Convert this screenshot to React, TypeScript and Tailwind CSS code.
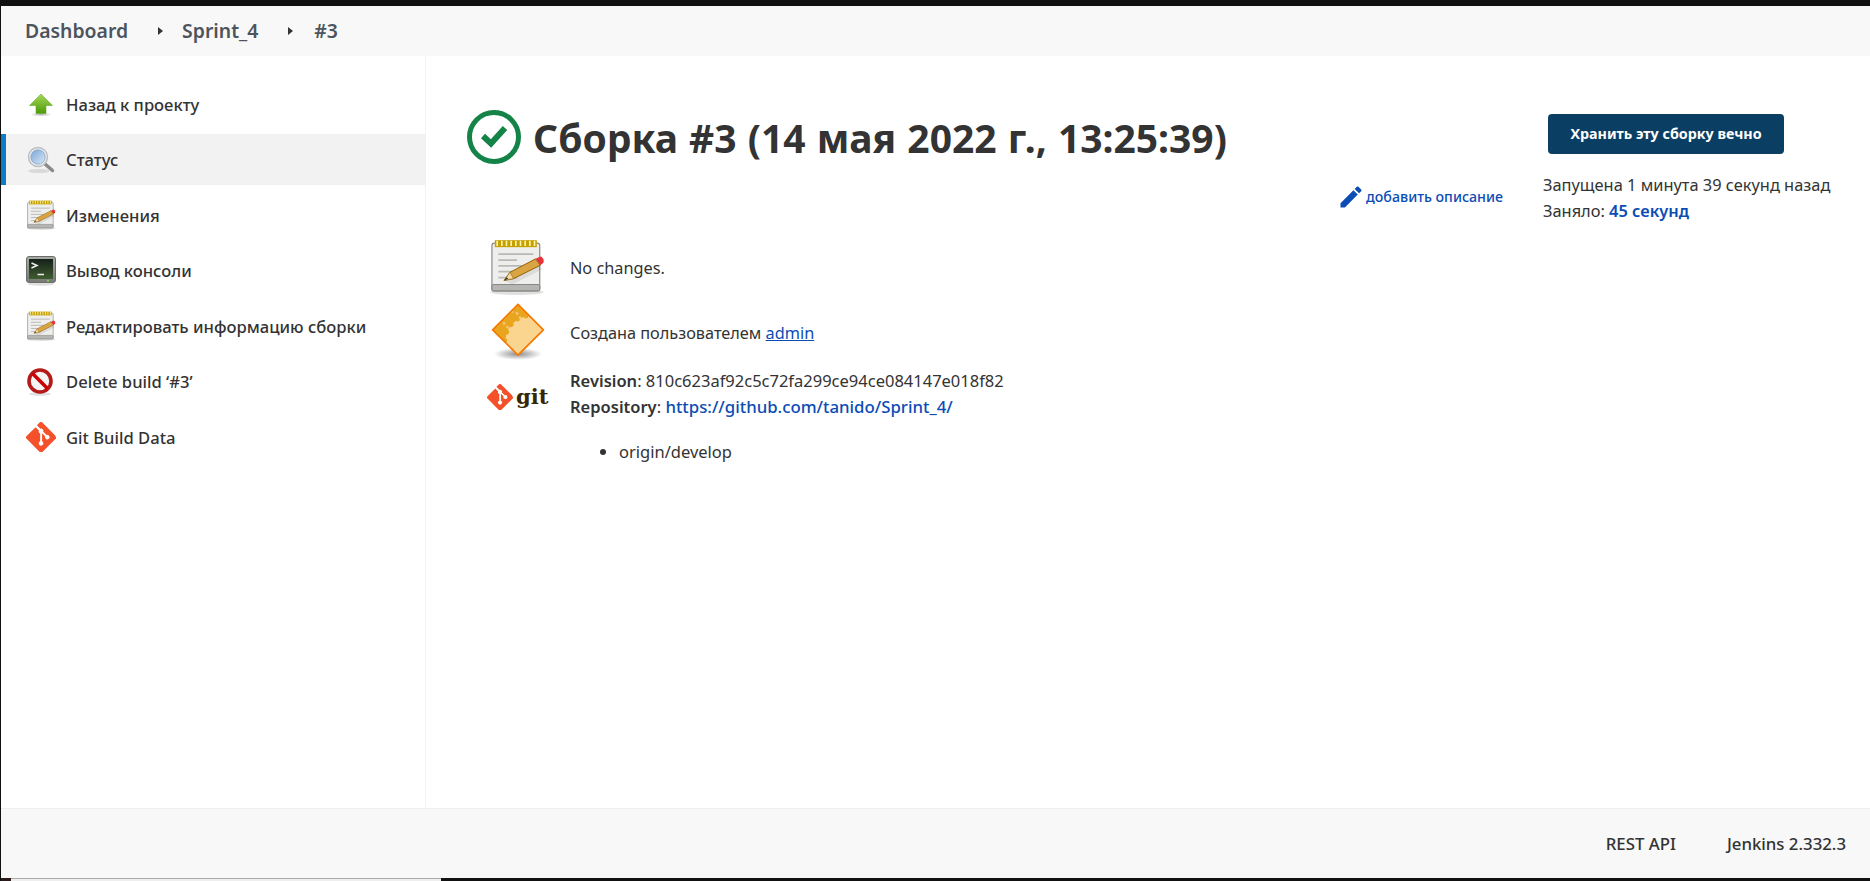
import React from "react";

function ArrowUp() {
  return (
    <svg width="24" height="24" viewBox="0 0 24 24">
      <defs>
        <linearGradient id="au" x1="0" y1="0" x2="0" y2="1">
          <stop offset="0" stopColor="#a6d95a" />
          <stop offset="1" stopColor="#4e9a06" />
        </linearGradient>
        <radialGradient id="sh"><stop offset="0" stopColor="#000" stopOpacity="0.3" /><stop offset="1" stopColor="#000" stopOpacity="0" /></radialGradient>
      </defs>
      <ellipse cx="12" cy="21.5" rx="11" ry="2" fill="url(#sh)" />
      <path d="M12 1 L23.5 12.5 H17 V20.5 H7 V12.5 H0.5 Z" fill="url(#au)" stroke="#5c9e16" strokeWidth="0.5" />
    </svg>
  );
}

function Search() {
  return (
    <svg width="28" height="28" viewBox="0 0 28 28">
      <defs>
        <linearGradient id="gl" x1="0" y1="0" x2="1" y2="1">
          <stop offset="0" stopColor="#7aa6d8" />
          <stop offset="1" stopColor="#dbe8f6" />
        </linearGradient>
      </defs>
      <ellipse cx="12" cy="25" rx="11" ry="2" fill="#000" opacity="0.1" />
      <path d="M18 18 L25.5 24.5" stroke="#8a8a8a" strokeWidth="3.5" strokeLinecap="round" />
      <circle cx="11" cy="11" r="9.5" fill="#eceff2" stroke="#bcc0c4" strokeWidth="1.5" />
      <circle cx="11" cy="11" r="7.2" fill="url(#gl)" stroke="#7d9cc0" strokeWidth="0.7" />
    </svg>
  );
}

function Notepad({ size }: { size: number }) {
  return (
    <svg width={size} height={size} viewBox="0 0 48 48">
      <ellipse cx="24" cy="45.5" rx="23" ry="2.5" fill="#000" opacity="0.12" />
      <rect x="2.5" y="3.5" width="41" height="41" rx="2" fill="#eeeeec" stroke="#888a85" />
      <rect x="2.5" y="39" width="41" height="5.5" rx="1.5" fill="#b5b6b3" stroke="#888a85" />
      <rect x="5" y="1" width="36" height="6" fill="#c4a000" />
      <path d="M7 1.5V6M11 1.5V6M15 1.5V6M19 1.5V6M23 1.5V6M27 1.5V6M31 1.5V6M35 1.5V6M39 1.5V6" stroke="#fff3b0" strokeWidth="1.4" />
      <path d="M8 13H38M8 18H24M8 23H38M8 28H30M8 33H24" stroke="#b9b9b6" strokeWidth="1.5" />
      <path d="M14 36 L41 20 L46 26 L20 39 Z" fill="#000" opacity="0.08" />
      <path d="M13 35.5 L18 28.5 L40 17 L44 22.5 L21 34 Z" fill="#d9a441" stroke="#8f5902" strokeWidth="0.8" />
      <path d="M13 35.5 L18 28.5 L21 34 Z" fill="#f3d9a6" stroke="#8f5902" strokeWidth="0.5" />
      <path d="M13 35.5 L15 32.7 L16.5 34 Z" fill="#333" />
      <path d="M40 17 L44 15 C46.5 15.5 47.5 18.5 46.5 20.5 L44 22.5 Z" fill="#e5333a" />
    </svg>
  );
}

function Terminal() {
  return (
    <svg width="30" height="30" viewBox="0 0 30 30">
      <defs>
        <linearGradient id="fr" x1="0" y1="0" x2="0" y2="1">
          <stop offset="0" stopColor="#a9aba6" />
          <stop offset="1" stopColor="#777974" />
        </linearGradient>
        <linearGradient id="sc" x1="0" y1="0" x2="0" y2="1">
          <stop offset="0" stopColor="#16201a" />
          <stop offset="1" stopColor="#3f5c30" />
        </linearGradient>
      </defs>
      <ellipse cx="15" cy="28" rx="13" ry="1.8" fill="#000" opacity="0.12" />
      <rect x="0.5" y="0.5" width="29" height="26" rx="2.5" fill="url(#fr)" stroke="#6b6d68" />
      <rect x="3" y="3" width="24" height="20" fill="url(#sc)" />
      <path d="M5.5 7 L11 9.5 L5.5 12" fill="none" stroke="#eee" strokeWidth="1.5" />
      <path d="M11.5 18.5H18" stroke="#eee" strokeWidth="1.5" />
      <rect x="21" y="24.2" width="2" height="1.4" fill="#7fe04a" />
    </svg>
  );
}

function NoEntry() {
  return (
    <svg width="28" height="28" viewBox="0 0 28 28">
      <ellipse cx="14" cy="26" rx="11" ry="1.8" fill="#000" opacity="0.12" />
      <circle cx="14" cy="13" r="11" fill="#f4f4f4" stroke="#b51a1a" strokeWidth="3.6" />
      <path d="M6.5 5.5 L21.5 20.5" stroke="#cc0000" strokeWidth="3.6" />
    </svg>
  );
}

function GitDiamond({ size }: { size: number }) {
  return (
    <svg width={size} height={size} viewBox="0 0 92 92">
      <path
        fill="#f4502a"
        d="M90.16 41.9 50.1 1.84a5.9 5.9 0 0 0-8.35 0l-8.32 8.32 10.55 10.55a7 7 0 0 1 8.87 8.93l10.17 10.17a7 7 0 1 1-4.2 3.95l-9.48-9.49v24.96a7 7 0 1 1-5.76-.2V35.36a7 7 0 0 1-3.8-9.18L29.35 15.8 1.84 43.3a5.9 5.9 0 0 0 0 8.35L41.9 91.7a5.9 5.9 0 0 0 8.35 0l39.9-39.45a5.9 5.9 0 0 0 0-8.35z"
      />
    </svg>
  );
}

function Gear() {
  return (
    <svg width="58" height="58" viewBox="0 0 48 48">
      <defs>
        <clipPath id="dm"><path d="M24 2 L45 23 L24 44 L3 23 Z" /></clipPath>
        <radialGradient id="gs"><stop offset="0" stopColor="#000" stopOpacity="0.45" /><stop offset="1" stopColor="#000" stopOpacity="0" /></radialGradient>
      </defs>
      <ellipse cx="24" cy="43" rx="20" ry="5" fill="url(#gs)" />
      <path d="M24 2 L45 23 L24 44 L3 23 Z" fill="#eaa51f" />
      <g clipPath="url(#dm)">
        <circle cx="19" cy="15" r="7" fill="none" stroke="#f3c26b" strokeWidth="2" strokeDasharray="2.5 2" />
        <circle cx="35" cy="33" r="20" fill="#fad58f" stroke="#fad58f" strokeWidth="3" strokeDasharray="3.5 3" />
        <circle cx="35" cy="33" r="20" fill="#fad58f" />
      </g>
      <path d="M24 2 L45 23 L24 44 L3 23 Z" fill="none" stroke="#f57900" strokeWidth="1.4" strokeLinejoin="round" />
    </svg>
  );
}

function SidebarItem({ icon, label, active }: { icon: React.ReactNode; label: string; active?: boolean }) {
  return (
    <div className={`flex h-[51px] items-center border-l-[5px] ${active ? "border-[#0a7fc8] bg-[#f2f2f2]" : "border-transparent"}`}>
      <div className="ml-[20px] flex w-[40px] items-center">{icon}</div>
      <span className="pt-[2px] text-[16.6px] font-medium text-[#333]">{label}</span>
    </div>
  );
}

function Caret({ className }: { className: string }) {
  return <span className={`h-0 w-0 border-y-[4px] border-l-[5px] border-y-transparent border-l-[#333] ${className}`} />;
}

export default function App() {
  return (
    <div className="flex h-[881px] w-full flex-col overflow-hidden bg-[#111] pt-[6px] pl-px font-['Noto_Sans',sans-serif] text-[#333]">
      <nav className="flex h-[50px] shrink-0 items-center bg-[#f8f8f8] pl-[24px] text-[19.4px] font-semibold text-[#4d545d]">
        <span>Dashboard</span>
        <Caret className="ml-[30px] mr-[19px]" />
        <span>Sprint_4</span>
        <Caret className="ml-[30px] mr-[21px]" />
        <span>#3</span>
      </nav>
      <div className="flex min-h-0 flex-1 bg-white">
        <aside className="w-[425px] shrink-0 border-r border-[#f1f1f1] pt-[23px]">
          <SidebarItem icon={<span className="ml-[3px]"><ArrowUp /></span>} label="Назад к проекту" />
          <div className="h-[4px]" />
          <SidebarItem active icon={<span className="ml-[1px]"><Search /></span>} label="Статус" />
          <div className="flex flex-col gap-[4.5px] pt-[4.5px]">
            <SidebarItem icon={<Notepad size={30} />} label="Изменения" />
            <SidebarItem icon={<Terminal />} label="Вывод консоли" />
            <SidebarItem icon={<Notepad size={30} />} label="Редактировать информацию сборки" />
            <SidebarItem icon={<NoEntry />} label="Delete build ‘#3’" />
            <SidebarItem icon={<GitDiamond size={30} />} label="Git Build Data" />
          </div>
        </aside>
        <main className="relative min-w-0 flex-1 pl-[40px] pt-[52px]">
          <div className="flex justify-between">
            <div className="min-w-0 flex-1">
              <div className="flex items-center gap-[12px]">
                <svg width="54" height="54" viewBox="0 0 54 54" className="ml-[1px] mt-[2px] shrink-0 self-start">
                  <circle cx="27" cy="27" r="24.5" fill="none" stroke="#138347" strokeWidth="5" />
                  <path d="M16 26 L24 33.5 L38 18" fill="none" stroke="#138347" strokeWidth="6" />
                </svg>
                <h1 className="whitespace-nowrap pt-[3px] text-[39px] font-bold leading-[54px] text-[#333] [word-spacing:1px]">Сборка #3 (14 мая 2022 г., 13:25:39)</h1>
              </div>
              <div className="mt-[18px] flex items-center justify-end pr-[40px] text-[14.2px] font-medium text-[#0b4cb5]">
                <svg width="28" height="28" viewBox="0 0 24 24" className="mr-[1.5px]" fill="#0b4cb5">
                  <path d="M3 17.25V21h3.75L17.81 9.94l-3.75-3.75L3 17.25zM20.71 7.04a1 1 0 0 0 0-1.41l-2.34-2.34a1 1 0 0 0-1.41 0l-1.83 1.83 3.75 3.75 1.83-1.83z" />
                </svg>
                добавить описание
              </div>
              <div className="mt-[25px] pl-[23px]">
                <div className="flex h-[62px] items-center">
                  <div className="w-[81px]"><Notepad size={56} /></div>
                  <span className="pt-[2px] text-[16.3px]">No changes.</span>
                </div>
                <div className="mt-[5px] flex h-[60px] items-center">
                  <div className="-mt-[4px] w-[81px]"><Gear /></div>
                  <span className="text-[16.3px]">Создана пользователем <a className="text-[#0b4cb5] underline">admin</a></span>
                </div>
                <div className="mt-[5px] flex">
                  <div className="flex h-[56px] w-[81px] items-center gap-[3px] pt-[1px]">
                    <div className="-ml-[2px]"><GitDiamond size={26} /></div>
                    <span className="font-['DejaVu_Serif',serif] text-[21px] font-bold leading-none text-[#362701]">git</span>
                  </div>
                  <div className="text-[16.5px] leading-[26px]">
                    <div><b className="font-semibold">Revision</b>: 810c623af92c5c72fa299ce94ce084147e018f82</div>
                    <div><b className="font-semibold">Repository</b>: <a className="text-[16.8px] font-medium text-[#0b4cb5]">https://github.com/tanido/Sprint_4/</a></div>
                    <ul className="mt-[19px] list-disc pl-[49px]">
                      <li>origin/develop</li>
                    </ul>
                  </div>
                </div>
              </div>
            </div>
            <div className="mr-[32px] flex w-[295px] shrink-0 flex-col">
              <button className="ml-[5px] mt-[6px] h-[40px] w-[236px] rounded-[4px] bg-[#0a3f63] text-[14.3px] font-bold text-white">Хранить эту сборку вечно</button>
              <div className="mt-[18px] whitespace-nowrap text-[16.4px] leading-[26px]">
                <div>Запущена 1 минута 39 секунд назад</div>
                <div>Заняло: <a className="font-semibold text-[#0b4cb5]">45 секунд</a></div>
              </div>
            </div>
          </div>
        </main>
      </div>
      <footer className="flex h-[70px] shrink-0 items-center justify-end gap-[51px] border-t border-[#efefef] bg-[#f8f8f8] pr-[24px] text-[16.8px] font-medium text-[#333]">
        <span>REST API</span>
        <span>Jenkins 2.332.3</span>
      </footer>
      <div className="flex h-[3px] shrink-0">
        <div className="w-[10px] bg-[#2a1a1a]" />
        <div className="w-[430px] border-t border-[#aaaaaa] bg-[#eeeeee]" />
      </div>
    </div>
  );
}
